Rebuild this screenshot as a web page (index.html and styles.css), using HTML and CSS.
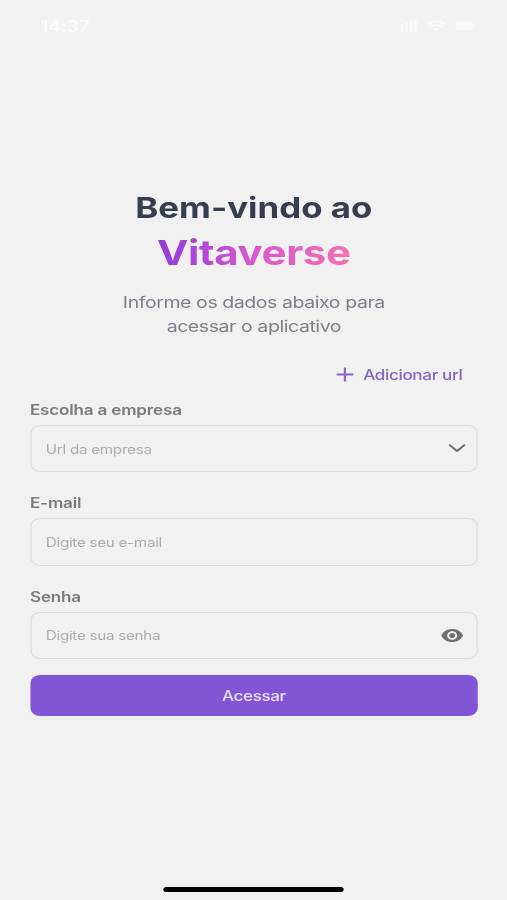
FILE: index.html
```html
<!DOCTYPE html>
<html lang="pt-BR">
<head>
    <meta charset="UTF-8">
    <meta name="viewport" content="width=device-width, initial-scale=1.0">
    <title>Vitaverse</title>
    <link rel="stylesheet" href="styles.css">
</head>
<body>
    <div class="screen">
        <header class="status-bar">
            <span class="time">14:37</span>
            <div class="status-icons">
                <svg width="13" height="12" viewBox="0 0 13 12" fill="currentColor"><rect x="0" y="4" width="2.2" height="8" rx="0.5"/><rect x="3.6" y="3" width="2.2" height="9" rx="0.5"/><rect x="7.2" y="1" width="2.2" height="11" rx="0.5"/><rect x="10.8" y="0" width="2.2" height="12" rx="0.5"/></svg>
                <svg width="16" height="12" viewBox="0 0 16 12" fill="none" stroke="currentColor" stroke-width="2"><path d="M1 4.2c4-4 10-4 14 0M3.4 7.2c2.7-2.6 6.5-2.6 9.2 0M6 10c1.2-1.1 2.8-1.1 4 0"/></svg>
                <svg width="17" height="12" viewBox="0 0 17 12" fill="currentColor"><rect x="0" y="1.5" width="14" height="9" rx="2"/><rect x="15" y="4.5" width="1.2" height="3" rx="0.5"/></svg>
            </div>
        </header>

        <main class="login">
            <h1 class="title">Bem-vindo ao</h1>
            <div class="brand">Vitaverse</div>
            <p class="subtitle">Informe os dados abaixo para<br>acessar o aplicativo</p>

            <button type="button" class="add-url">
                <svg width="14" height="15" viewBox="0 0 14 15" fill="none" stroke="currentColor" stroke-width="1.8"><path d="M7 .5v14M0 7.5h14"/></svg>
                <span>Adicionar url</span>
            </button>

            <form class="login-form">
                <div class="form-group">
                    <label for="company">Escolha a empresa</label>
                    <div class="field">
                        <input type="text" id="company" name="company" placeholder="Url da empresa" readonly>
                        <svg class="chevron" width="14" height="9" viewBox="0 0 14 9" fill="none" stroke="currentColor" stroke-width="1.8" stroke-linecap="round" stroke-linejoin="round"><path d="M1 1.2l6 5.8 6-5.8"/></svg>
                    </div>
                </div>
                <div class="form-group">
                    <label for="email">E-mail</label>
                    <div class="field">
                        <input type="email" id="email" name="email" placeholder="Digite seu e-mail">
                    </div>
                </div>
                <div class="form-group">
                    <label for="password">Senha</label>
                    <div class="field">
                        <input type="password" id="password" name="password" placeholder="Digite sua senha">
                        <svg class="eye" width="18" height="13" viewBox="1 4.5 22 15" preserveAspectRatio="none" fill="currentColor"><path d="M12 4.5C7 4.5 2.73 7.61 1 12c1.73 4.39 6 7.5 11 7.5s9.27-3.11 11-7.5c-1.73-4.39-6-7.5-11-7.5zM12 17c-2.76 0-5-2.24-5-5s2.24-5 5-5 5 2.24 5 5-2.24 5-5 5zm0-8c-1.66 0-3 1.34-3 3s1.34 3 3 3 3-1.34 3-3-1.34-3-3-3z"/></svg>
                    </div>
                </div>
                <button type="submit" class="submit-button">Acessar</button>
            </form>
        </main>

        <div class="home-indicator"></div>
    </div>
</body>
</html>
```

FILE: styles.css
```css
* { box-sizing: border-box; }
body { margin: 0; background-color: #f1f1f1; font-family: Inter, "Liberation Sans", sans-serif; overflow: hidden; }
.screen { display: flex; flex-direction: column; width: 416px; height: 900px; transform: scaleX(1.21875); transform-origin: 0 0; }

.status-bar { display: flex; justify-content: space-between; align-items: center; height: 52px; padding: 0 25px 0 33px; color: #fafafa; }
.time { font-size: 16px; line-height: 20px; font-weight: 600; letter-spacing: -0.3px; }
.status-icons { display: flex; align-items: center; gap: 8px; }
.status-icons svg { display: block; }

.login { flex: 1; padding: 138px 24px 0 24.6px; }
.title { margin: 0; font-size: 28.6px; line-height: 36px; font-weight: 700; text-align: center; color: #353d4e; }
.brand { width: max-content; margin: 5px auto 0; font-size: 34.5px; line-height: 44px; font-weight: 700; letter-spacing: -0.35px; background: linear-gradient(90deg, #8f3bdc, #d957cf 50%, #f56fae); -webkit-background-clip: text; background-clip: text; color: transparent; }
.subtitle { margin: 15px 0 0; font-size: 16px; line-height: 24px; letter-spacing: -0.35px; text-align: center; color: #7b808a; }

.add-url { display: flex; align-items: center; gap: 7.5px; margin: 26px 12.5px 0 auto; padding: 0; border: none; background: none; font: 500 14px/22px Inter, "Liberation Sans", sans-serif; letter-spacing: -0.28px; color: #8467c6; }
.add-url svg { margin-top: -1px; }

.login-form { margin-top: 14px; }
.form-group { margin-bottom: 21px; }
label { display: block; height: 20px; margin-bottom: 5px; font-size: 14px; line-height: 20px; font-weight: 600; letter-spacing: -0.15px; color: #7b7b7b; }
.field { display: flex; align-items: center; height: 47.3px; padding: 0 9px 0 12px; border: 1px solid #dcdcdc; border-radius: 8px; color: #707070; }
.field input { flex: 1; min-width: 0; padding: 2px 0 0; border: none; outline: none; background: none; font: 400 12.5px/20px Inter, "Liberation Sans", sans-serif; letter-spacing: -0.24px; color: #555; }
.field input::placeholder { color: #adadad; opacity: 1; }
.eye { margin-right: 2px; }
.form-group:last-of-type { margin-bottom: 16px; }
.submit-button { display: block; width: 100%; height: 41px; padding: 1px 0 0; border: none; border-radius: 8px; background-color: #8056d6; font: 500 14px/20px Inter, "Liberation Sans", sans-serif; letter-spacing: -0.3px; color: #e9dff9; }

.home-indicator { width: 148px; height: 5px; margin: 0 auto 8px; border-radius: 3px; background-color: #000; }
```
